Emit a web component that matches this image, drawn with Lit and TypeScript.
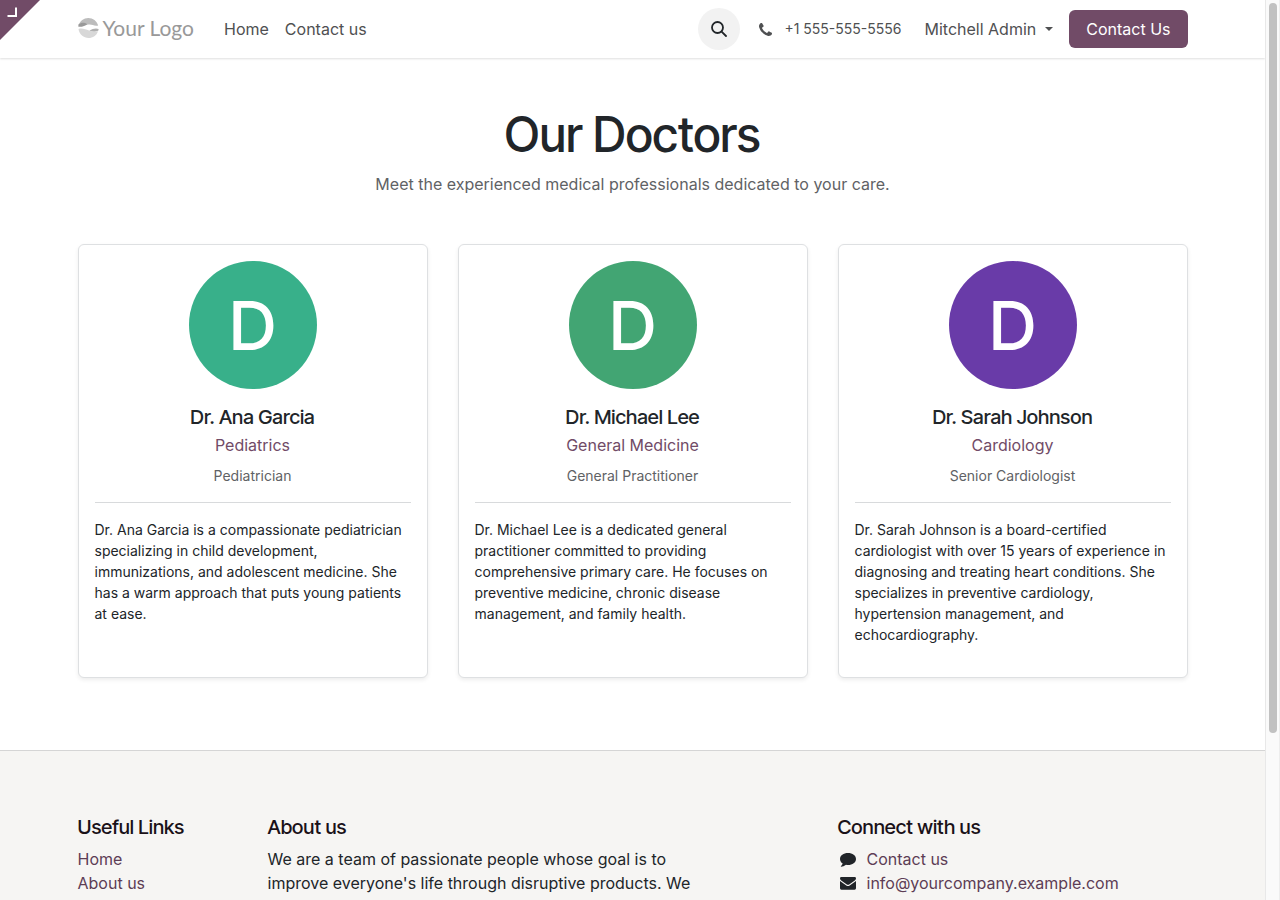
import { LitElement, html, css } from "lit";
import { customElement } from "lit/decorators.js";
import { classMap } from "lit/directives/class-map.js";

interface Doctor {
  name: string;
  field: string;
  title: string;
  bio: string;
  tone: "teal" | "green" | "violet";
}

const DOCTORS: Doctor[] = [
  {
    name: "Dr. Ana Garcia",
    field: "Pediatrics",
    title: "Pediatrician",
    bio: "Dr. Ana Garcia is a compassionate pediatrician specializing in child development, immunizations, and adolescent medicine. She has a warm approach that puts young patients at ease.",
    tone: "teal",
  },
  {
    name: "Dr. Michael Lee",
    field: "General Medicine",
    title: "General Practitioner",
    bio: "Dr. Michael Lee is a dedicated general practitioner committed to providing comprehensive primary care. He focuses on preventive medicine, chronic disease management, and family health.",
    tone: "green",
  },
  {
    name: "Dr. Sarah Johnson",
    field: "Cardiology",
    title: "Senior Cardiologist",
    bio: "Dr. Sarah Johnson is a board-certified cardiologist with over 15 years of experience in diagnosing and treating heart conditions. She specializes in preventive cardiology, hypertension management, and echocardiography.",
    tone: "violet",
  },
];

@customElement("doctor-card")
class DoctorCard extends LitElement {
  static properties = { doctor: { attribute: false } };
  declare doctor: Doctor;

  static styles = css`
    :host {
      display: block;
      box-sizing: border-box;
      padding: 16px;
      border: 1px solid #dee0e2;
      border-radius: 6px;
      background: #fff;
      box-shadow: 0 2px 4px rgba(0, 0, 0, 0.075);
      text-align: center;
    }
    .avatar {
      display: flex;
      align-items: center;
      justify-content: center;
      width: 128px;
      height: 128px;
      margin: 0 auto 16px;
      border-radius: 50%;
      color: #fff;
      font-size: 68px;
      font-weight: 500;
      line-height: 1;
    }
    .teal { background: #38b08a; }
    .green { background: #42a573; }
    .violet { background: #693ba8; }
    .name {
      margin: 0 0 4px;
      font-family: "Inter Tight", "Inter Display", Inter, sans-serif;
      font-size: 20px;
      line-height: 24px;
      font-weight: 500;
      color: #212529;
    }
    .field {
      margin: 0 0 8px;
      color: #714b67;
    }
    .title {
      margin: 0;
      font-size: 14px;
      line-height: 21px;
      color: #5f6265;
    }
    .rule {
      margin: 16px 0;
      border: 0;
      border-top: 1px solid #d8dadc;
    }
    .bio {
      margin: 0 0 16px;
      font-size: 14px;
      line-height: 21px;
      text-align: left;
    }
  `;

  render() {
    const d = this.doctor;
    return html`
      <div class=${classMap({ avatar: true, [d.tone]: true })}>D</div>
      <h2 class="name">${d.name}</h2>
      <p class="field">${d.field}</p>
      <p class="title">${d.title}</p>
      <hr class="rule" />
      <p class="bio">${d.bio}</p>
    `;
  }
}

@customElement("app-root")
class AppRoot extends LitElement {
  static styles = css`
    :host {
      display: flex;
      height: 100vh;
      overflow: hidden;
      position: relative;
      background: #fff;
      color: #212529;
      font-family: Inter, "Liberation Sans", sans-serif;
      font-size: 16px;
      line-height: 24px;
    }
    a { text-decoration: none; color: inherit; }
    button { font: inherit; border: 0; cursor: pointer; }
    svg { display: block; }
    .page {
      flex: 1;
      min-width: 0;
      overflow: hidden;
    }
    .container {
      box-sizing: border-box;
      max-width: 1140px;
      margin: 0 auto;
      padding: 0 15px;
    }
    .corner {
      position: absolute;
      top: 0;
      left: 0;
      width: 40px;
      height: 40px;
    }
    .header {
      box-shadow: 0 1px 2px rgba(0, 0, 0, 0.13);
    }
    .bar {
      display: flex;
      align-items: center;
      padding-top: 8px;
      padding-bottom: 8px;
      color: #4f5052;
    }
    .brand {
      display: flex;
      align-items: center;
      gap: 4px;
      margin-right: 30px;
      padding-bottom: 2px;
      font-family: Lato, sans-serif;
      font-size: 21px;
      color: #999;
    }
    .nav {
      display: flex;
      gap: 16px;
      flex: 1;
    }
    .search {
      display: flex;
      align-items: center;
      justify-content: center;
      width: 42px;
      height: 42px;
      padding: 0;
      border-radius: 50%;
      background: #f2f2f2;
      color: #212529;
    }
    .phone {
      display: flex;
      align-items: center;
      gap: 12px;
      margin: 0 23px 0 19px;
      font-size: 14px;
    }
    .user {
      display: flex;
      align-items: center;
      gap: 9px;
      padding: 0;
      margin-right: 16px;
      background: none;
      color: inherit;
    }
    .caret {
      border: 4px solid transparent;
      border-top-color: currentColor;
      border-bottom: 0;
    }
    .cta {
      padding: 7px 17px;
      border-radius: 6px;
      background: #714b67;
      color: #fff;
    }
    .main {
      padding-top: 48px;
      padding-bottom: 72px;
    }
    .heading {
      margin: 0 0 8px;
      font-family: "Inter Tight", "Inter Display", Inter, sans-serif;
      font-size: 48px;
      line-height: 58px;
      font-weight: 500;
      text-align: center;
    }
    .lead {
      margin: 0 0 48px;
      text-align: center;
      color: #5f6265;
    }
    .cards {
      display: grid;
      grid-template-columns: repeat(3, 1fr);
      gap: 30px;
    }
    .footer {
      border-top: 1px solid #d5d5d5;
      background: #f6f5f3;
      padding: 64px 0;
    }
    .columns {
      display: grid;
      grid-template-columns: repeat(12, 1fr);
      column-gap: 30px;
    }
    .links { grid-column: 1 / span 2; }
    .about { grid-column: 3 / span 5; }
    .connect { grid-column: 9 / span 4; }
    .subheading {
      margin: 0 0 8px;
      font-family: "Inter Tight", "Inter Display", Inter, sans-serif;
      font-size: 20px;
      line-height: 24px;
      font-weight: 500;
      color: #1a1118;
    }
    .list {
      margin: 0;
      padding: 0;
      list-style: none;
      color: #5d3d55;
    }
    .contact {
      display: flex;
      align-items: center;
      gap: 8px;
    }
    .icon { color: #212529; }
    .text { margin: 0; }
    .scrollbar {
      box-sizing: border-box;
      width: 15px;
      padding: 3px 2px 3px 3px;
      border-left: 1px solid #e8e8e8;
      border-right: 1px solid #ededed;
      background: #fafafa;
    }
    .thumb {
      width: 8px;
      height: 81.6%;
      border-radius: 4px;
      background: #c1c1c1;
    }
  `;

  render() {
    return html`
      <div class="page">
        <header class="header">
          <div class="container bar">
            <a class="brand" href="#">
              <svg width="21" height="22" viewBox="0 0 21 22" aria-hidden="true">
                <path d="M0.800 8C2 4 5.700 1 10.300 1S19 4 20.200 8.500C16 9.500 14 7 10.500 7.600C7 8.200 4 8.600 0.800 8Z" fill="#bcbcbc" />
                <path d="M0.400 7.500C3 5.500 6 5 9.200 7.200C7.500 8.700 4 10.200 0.400 9.800Z" fill="#999" />
                <path d="M20.600 12C18 10.600 14.500 11.800 11.500 13.200C14 15 18 15.300 20.400 13.600Z" fill="#b0b0b0" />
                <path d="M0.500 12C4 10.800 7.500 12.300 11 13.500C14 14.600 17.500 15 20 14.200C18.600 18.500 14.900 21 10.500 21C5.700 21 1.300 17.500 0.500 12Z" fill="#d8d8d8" />
              </svg>
              <span>Your Logo</span>
            </a>
            <nav class="nav">
              <a href="#">Home</a>
              <a href="#">Contact us</a>
            </nav>
            <button class="search" aria-label="Search">
              <svg width="16" height="16" viewBox="0 0 16 16" fill="none" stroke="currentColor" stroke-width="1.800" stroke-linecap="round">
                <circle cx="6.500" cy="6.500" r="5.500" />
                <path d="M10.600 10.600L15 15" />
              </svg>
            </button>
            <a class="phone" href="tel:+15555555556">
              <svg width="13" height="13" viewBox="0 0 1408 1408" fill="currentColor" aria-hidden="true">
                <path d="M1408 1112q0 27-10 70.500t-21 68.500q-21 50-122 106-94 51-186 51-27 0-53-3.500t-57.500-12.500-47-14.500-55.500-20.500-49-18q-98-35-175-83-127-79-264-216t-216-264q-48-77-83-175-3-9-18-49t-20.500-55.500-14.500-47-12.500-57.500-3.500-53q0-92 51-186 56-101 106-122 25-11 68.500-21t70.500-10q14 0 21 3 18 6 53 76 11 19 30 54t35 63.500 31 53.500q3 4 17.500 25t21.500 35.500 7 28.500q0 20-28.500 50t-62 55-62 53-28.500 46q0 9 5 22.500t8.500 20.500 14 24 11.500 19q76 137 174 235t235 174q2 1 19 11.500t24 14 20.500 8.500 22.500 5q18 0 46-28.500t53-62 55-62 50-28.500q14 0 28.500 7t35.500 21.500 25 17.500q25 15 53.500 31t63.500 35 54 30q70 35 76 53 3 7 3 21z" />
              </svg>
              <span>+1 555-555-5556</span>
            </a>
            <button class="user">Mitchell Admin <span class="caret"></span></button>
            <a class="cta" href="#">Contact Us</a>
          </div>
        </header>

        <main class="container main">
          <h1 class="heading">Our Doctors</h1>
          <p class="lead">Meet the experienced medical professionals dedicated to your care.</p>
          <div class="cards">
            ${DOCTORS.map((d) => html`<doctor-card .doctor=${d}></doctor-card>`)}
          </div>
        </main>

        <footer class="footer">
          <div class="container columns">
            <section class="links">
              <h2 class="subheading">Useful Links</h2>
              <ul class="list">
                <li><a href="#">Home</a></li>
                <li><a href="#">About us</a></li>
              </ul>
            </section>
            <section class="about">
              <h2 class="subheading">About us</h2>
              <p class="text">We are a team of passionate people whose goal is to improve everyone's life through disruptive products. We</p>
            </section>
            <section class="connect">
              <h2 class="subheading">Connect with us</h2>
              <ul class="list">
                <li class="contact">
                  <svg class="icon" width="21" height="16" viewBox="0 0 21 16" fill="currentColor" aria-hidden="true">
                    <path d="M10 2C14.500 2 18 4.500 18 8S14.500 14 10 14C9.300 14 8.700 13.900 8 13.800C6.500 15 4.500 15.700 3 15.800C2.700 15.700 2.700 15.400 2.900 15.200C3.800 14.400 4.500 13.500 4.700 12.600C3 11.500 2 9.900 2 8C2 4.500 5.500 2 10 2Z" />
                  </svg>
                  <a href="#">Contact us</a>
                </li>
                <li class="contact">
                  <svg class="icon" width="21" height="16" viewBox="0 0 21 16" fill="currentColor" aria-hidden="true">
                    <path d="M2 6V13.300Q2 14.700 3.400 14.700H16.600Q18 14.700 18 13.300V6L11.700 10.500Q10 11.700 8.300 10.500Z" />
                    <path d="M3.300 2H16.700Q18 2 18 3.400Q18 4.500 16.800 5.400L11.500 9.200Q10 10.300 8.500 9.200L3.200 5.400Q2 4.500 2 3.400Q2 2 3.300 2Z" />
                  </svg>
                  <a href="mailto:info@yourcompany.example.com">info@yourcompany.example.com</a>
                </li>
              </ul>
            </section>
          </div>
        </footer>
      </div>
      <div class="scrollbar" aria-hidden="true"><div class="thumb"></div></div>
      <svg class="corner" viewBox="0 0 40 40" aria-hidden="true">
        <path d="M0 0H40L0 40Z" fill="#714b67" />
        <path d="M7.500 16H16V7.500" fill="none" stroke="#fff" stroke-width="2" />
      </svg>
    `;
  }
}
